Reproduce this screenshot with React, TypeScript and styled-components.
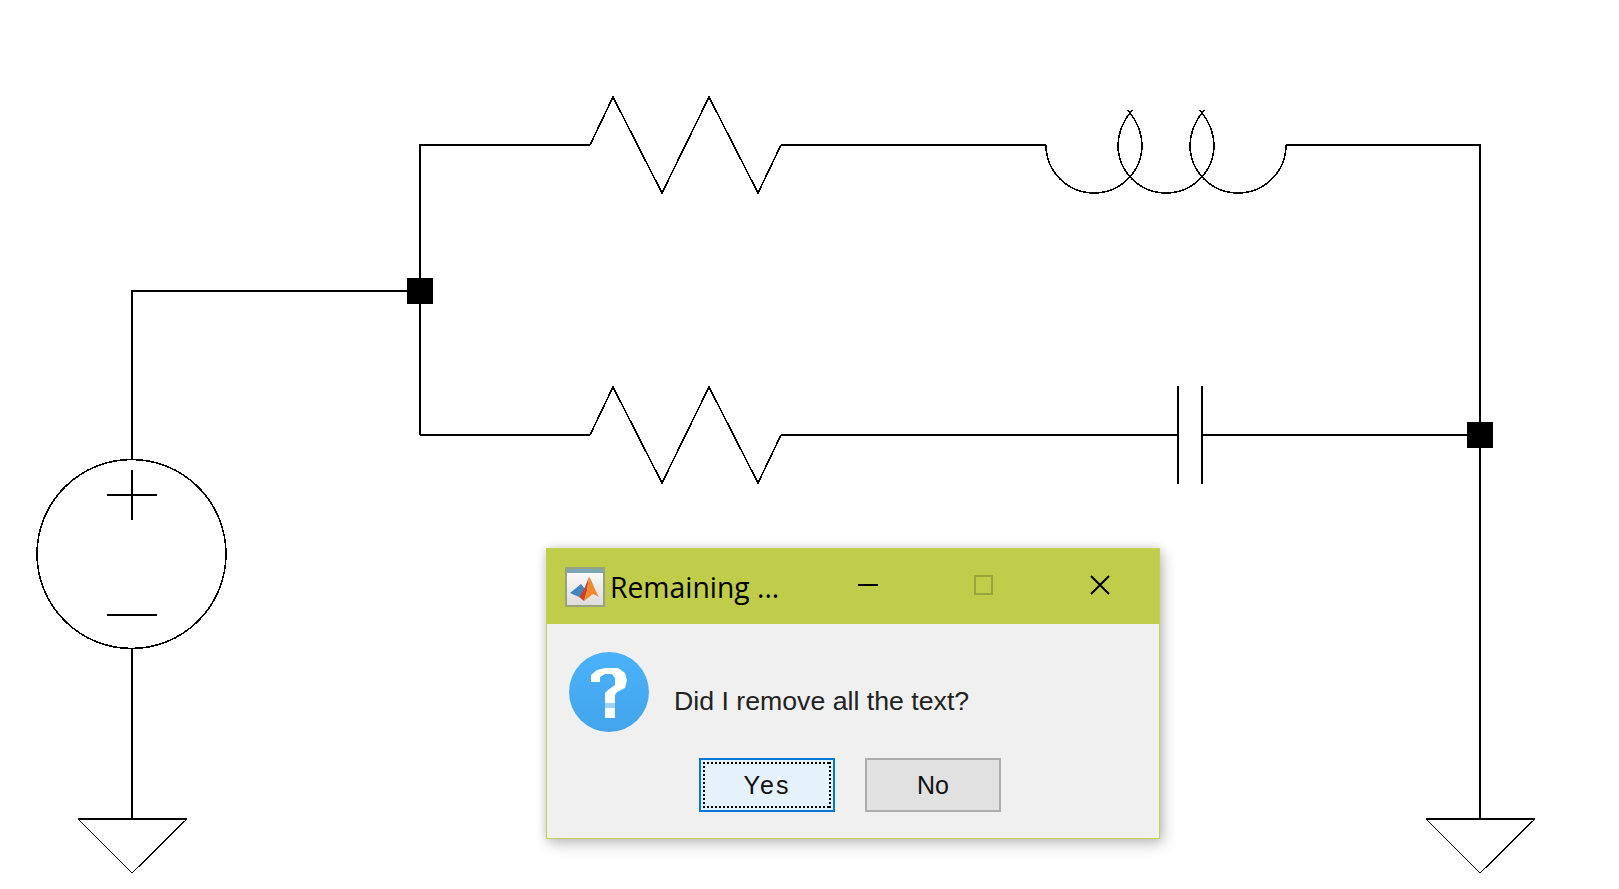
import React from "react";
import styled, { createGlobalStyle } from "styled-components";

const GlobalStyle = createGlobalStyle`
  html, body {
    margin: 0;
    padding: 0;
    background: #fff;
  }
`;

const Page = styled.div`
  position: relative;
  width: 1619px;
  height: 889px;
  overflow: hidden;
  background: #fff;
`;

const Schematic = styled.svg`
  display: block;
  width: 100%;
  height: 100%;
`;

const Dialog = styled.div`
  position: absolute;
  left: 546px;
  top: 548px;
  width: 614px;
  height: 291px;
  box-sizing: border-box;
  border: 1px solid #c5d152;
  background: #f0f0f0;
  box-shadow: 3px 5px 14px rgba(0, 0, 0, 0.22), 0 0 8px rgba(0, 0, 0, 0.14);
`;

const TitleBar = styled.div`
  display: flex;
  align-items: center;
  height: 75px;
  padding: 0 1px 0 18px;
  background: #bfcd4a;
`;

const TitleText = styled.span`
  margin-left: 5px;
  font-family: "Open Sans", "Noto Sans", sans-serif;
  font-size: 28.3px;
  color: #000;
  white-space: nowrap;
`;

const Controls = styled.div`
  display: flex;
  margin-left: auto;
`;

const ControlButton = styled.div`
  display: flex;
  align-items: center;
  justify-content: center;
  box-sizing: border-box;
  width: 116px;
  height: 75px;
  padding-bottom: 3px;
`;

const Message = styled.div`
  display: flex;
  padding: 28px 0 0 22px;
`;

const MessageText = styled.div`
  margin: 34px 0 0 25px;
  font-family: "Liberation Sans", Arial, sans-serif;
  font-size: 26.7px;
  line-height: 30px;
  color: #222;
`;

const Buttons = styled.div`
  display: flex;
  gap: 30px;
  padding: 26px 0 0 152px;
`;

const Button = styled.div<{ $focused?: boolean }>`
  position: relative;
  display: flex;
  align-items: center;
  justify-content: center;
  box-sizing: border-box;
  width: 136px;
  height: 54px;
  border: 2px solid ${(p) => (p.$focused ? "#0078d7" : "#adadad")};
  background: ${(p) => (p.$focused ? "#e5f1fb" : "#e1e1e1")};
  font-family: "Liberation Sans", Arial, sans-serif;
  font-size: 25px;
  letter-spacing: ${(p) => (p.$focused ? "2px" : "0")};
  color: #111;
`;

const FocusRing = styled.span`
  position: absolute;
  inset: 2px;
  background:
    repeating-linear-gradient(90deg, #000 0 2px, transparent 2px 4px) top / 100% 2px no-repeat,
    repeating-linear-gradient(90deg, #000 0 2px, transparent 2px 4px) bottom / 100% 2px no-repeat,
    repeating-linear-gradient(0deg, #000 0 2px, transparent 2px 4px) left / 2px 100% no-repeat,
    repeating-linear-gradient(0deg, #000 0 2px, transparent 2px 4px) right / 2px 100% no-repeat;
`;

const LogoArt = styled.g`
  filter: blur(0.6px);
`;

const resistor = (y: number) =>
  `M590 ${y} L613 ${y - 48} L662 ${y + 48} L709 ${y - 48} L758 ${y + 48} L781 ${y}`;

const wires = [
  "M132 459 V291 H420",
  "M420 435 V145 H590",
  "M781 145 H1046",
  "M1286 145 H1480 V819",
  "M420 435 H590",
  "M781 435 H1178",
  "M1202 435 H1480",
  "M1178 386 V484",
  "M1202 386 V484",
  "M107 495 H157",
  "M132 470 V520",
  "M107 615 H157",
  "M132 649 V819",
  "M78 819 H187",
  "M1426 819 H1535",
];

// three overlapping turns, each one crossing the next just past its apex
const coil = [
  "M1046 145 A48 48 0 0 0 1094 193 A48 48 0 0 0 1142 145 C1142 132 1136 120 1128 110",
  "M1132 110 C1124 120 1118 132 1118 145 A48 48 0 0 0 1166 193 A48 48 0 0 0 1214 145 C1214 132 1208 120 1200 110",
  "M1204 110 C1196 120 1190 132 1190 145 A48 48 0 0 0 1238 193 A48 48 0 0 0 1286 145",
];

function Circuit() {
  return (
    <Schematic viewBox="0 0 1619 889" fill="none" stroke="#000" shapeRendering="crispEdges">
      <g strokeWidth={2}>
        {wires.map((d) => (
          <path key={d} d={d} />
        ))}
      </g>
      <g strokeWidth={1.6}>
        <path d={resistor(145)} />
        <path d={resistor(435)} />
        {coil.map((d) => (
          <path key={d} d={d} />
        ))}
        <circle cx={131.5} cy={554} r={94.5} />
      </g>
      <g strokeWidth={1.3}>
        <path d="M78 819 L132 873 L187 819" />
        <path d="M1426 819 L1480 873 L1535 819" />
      </g>
      <rect x={407} y={278} width={26} height={26} fill="#000" stroke="none" />
      <rect x={1467} y={422} width={26} height={26} fill="#000" stroke="none" />
    </Schematic>
  );
}

function MatlabIcon() {
  return (
    <svg width={40} height={40} viewBox="0 0 40 40">
      <defs>
        <linearGradient id="paneFill" x1="0" y1="0" x2="0" y2="1">
          <stop offset="0" stopColor="#fdfdfd" />
          <stop offset="1" stopColor="#dcdcdc" />
        </linearGradient>
      </defs>
      <rect x={1} y={1} width={38} height={38} fill="url(#paneFill)" stroke="#98a27c" strokeWidth={2} />
      <rect x={2} y={2} width={36} height={4} fill="#7da6b4" />
      <LogoArt>
        <path d="M5 26 L16 17 L20 22 L14 30 Z" fill="#3f86c2" />
        <path d="M14 30 L20 20 L24 10 L22 24 L19 34 Z" fill="#c9432a" />
        <path d="M24 10 C27 13 30 24 34 30 L28 27 L19 34 L22 24 Z" fill="#f08a2c" />
      </LogoArt>
    </svg>
  );
}

function QuestionIcon() {
  return (
    <svg width={80} height={80} viewBox="0 0 80 80">
      <defs>
        <linearGradient id="bubbleFill" x1="0" y1="0" x2="0" y2="1">
          <stop offset="0" stopColor="#4ab2fb" />
          <stop offset="1" stopColor="#43a4ea" />
        </linearGradient>
      </defs>
      <circle cx={40} cy={40} r={40} fill="url(#bubbleFill)" />
      <path
        d="M22 30 V23 L28 18 L36 16 H49 L56 21 L58 28 L56 36 L48 40 L46 43 V51 H36 V41 L39 38 L46 33 V26 L43 22 H36 L31 25 V30 Z"
        fill="#fff"
      />
      <rect x={36} y={51} width={10} height={5} fill="#9fd0f5" />
      <rect x={36} y={56} width={10} height={10} fill="#fff" />
    </svg>
  );
}

export default function App() {
  return (
    <Page>
      <GlobalStyle />
      <Circuit />
      <Dialog>
        <TitleBar>
          <MatlabIcon />
          <TitleText>Remaining ...</TitleText>
          <Controls>
            <ControlButton>
              <svg width={20} height={2}>
                <rect width={20} height={2} fill="#000" />
              </svg>
            </ControlButton>
            <ControlButton>
              <svg width={22} height={20}>
                <rect x={2} y={1} width={17} height={18} fill="none" stroke="#97a53c" strokeWidth={2} />
              </svg>
            </ControlButton>
            <ControlButton>
              <svg width={20} height={20}>
                <path d="M1 1 L19 19 M19 1 L1 19" stroke="#000" strokeWidth={2} />
              </svg>
            </ControlButton>
          </Controls>
        </TitleBar>
        <Message>
          <QuestionIcon />
          <MessageText>Did I remove all the text?</MessageText>
        </Message>
        <Buttons>
          <Button $focused>
            <FocusRing />
            Yes
          </Button>
          <Button>No</Button>
        </Buttons>
      </Dialog>
    </Page>
  );
}
